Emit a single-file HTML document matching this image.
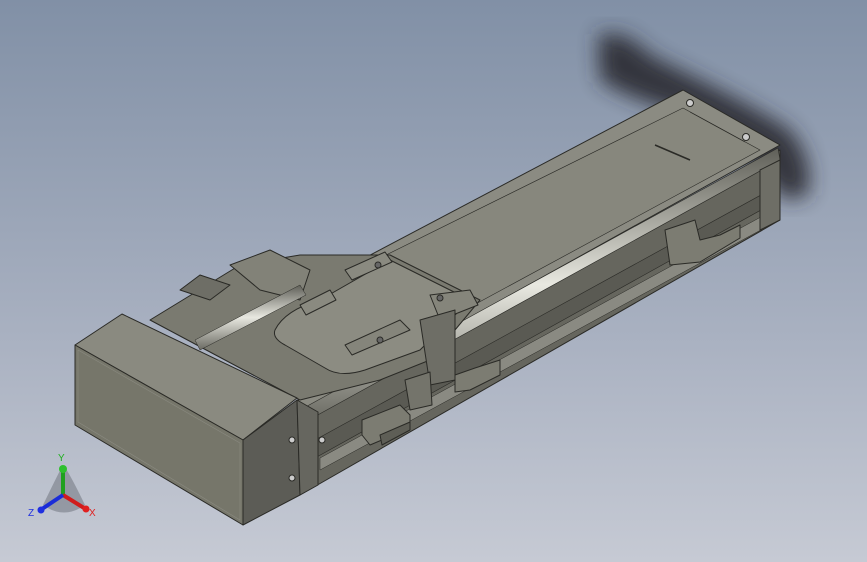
<!DOCTYPE html>
<html><head><style>
html,body{margin:0;padding:0;}
body{width:867px;height:562px;overflow:hidden;background:linear-gradient(#8190a6,#a9b1c1 60%,#c6cad4);}
svg{position:absolute;left:0;top:0}
</style></head><body>
<svg width="867" height="562" viewBox="0 0 867 562">
<defs>
<filter id="bl"><feGaussianBlur stdDeviation="10"/></filter>
<linearGradient id="rod" x1="0" y1="0" x2="0" y2="1"><stop offset="0" stop-color="#5f5f58"/><stop offset=".5" stop-color="#e8e8e0"/><stop offset="1" stop-color="#6a6a62"/></linearGradient>
</defs>
<!-- shadow -->
<path d="M598 35 Q625 28 650 55 L700 80 Q760 110 790 130 Q815 160 808 195 L785 200 L740 150 L690 115 Q630 100 600 80 Z" fill="#2a2c32" filter="url(#bl)" opacity=".9"/>
<g stroke="#2a2a26" stroke-width="1" stroke-linejoin="round">
<!-- rail side face -->
<polygon points="300,410 780,150 780,220 300,495" fill="#66665e"/>
<!-- rail top -->
<polygon points="285,300 683,90 780,145 300,412" fill="#8b8b82"/>
<polygon points="380,258 683,108 760,150 400,345" fill="#87877d" stroke-width=".6"/>
<line x1="655" y1="145" x2="690" y2="160" stroke-width="1.5"/>
<line x1="690" y1="112" x2="745" y2="142" stroke-width=".7"/>
<!-- top rounded edge rod -->
<polygon points="300,410 778,148 780,160 305,422" fill="url(#rod)" stroke-width=".6"/>
<!-- side slot -->
<polygon points="315,440 770,190 770,205 315,458" fill="#5a5a53" stroke-width=".6"/>
<polygon points="320,470 770,225 770,212 320,458" fill="#8a8a82" stroke-width=".5"/>
<!-- end cap right -->
<polygon points="760,170 780,160 780,220 760,230" fill="#6e6e66"/>
<!-- carriage & motor area -->
<polygon points="150,320 240,265 300,255 390,255 480,300 430,360 380,380 300,400" fill="#7a7a70"/>
<polygon points="230,265 270,250 310,270 300,300 260,290" fill="#828278"/>
<polygon points="180,290 200,275 230,285 210,300" fill="#6e6e66"/>
<polygon points="195,340 300,285 306,295 200,350" fill="url(#rod)" stroke-width=".5"/>
<!-- carriage plate -->
<path d="M275 330 Q285 310 320 300 L390 260 L440 285 L470 300 L420 350 L365 370 Q340 378 325 368 L285 345 Q272 338 275 330 Z" fill="#8c8c82"/>
<polygon points="345,270 385,252 392,262 352,280" fill="#8a8a80"/>
<polygon points="300,305 330,290 336,300 306,315" fill="#8a8a80"/>
<polygon points="345,345 400,320 410,330 352,355" fill="#85857b"/>
<polygon points="430,295 470,290 478,305 440,320" fill="#85857b"/>
<polygon points="420,320 455,310 455,380 430,385" fill="#6e6e66"/>
<!-- blocks on side -->
<polygon points="362,420 400,405 410,415 410,428 370,445 362,435" fill="#7c7c72"/>
<polygon points="380,435 410,422 410,430 382,445" fill="#5e5e56"/>
<polygon points="455,375 475,368 500,360 500,375 470,390 455,392" fill="#7c7c72"/>
<polygon points="665,230 695,220 700,240 720,235 740,225 740,238 700,262 670,265" fill="#7c7c72"/>
<polygon points="405,380 430,372 432,405 410,410" fill="#74746b"/>
<!-- motor box top -->
<polygon points="75,345 122,314 297,398 243,440" fill="#8a8a80"/>
<!-- motor box front face -->
<polygon points="75,345 243,440 243,525 75,425" fill="#76766a"/>
<polygon points="78,350 240,443 240,520 78,422" fill="none" stroke="#8a8a80" stroke-width=".6"/>
<!-- end plate -->
<polygon points="243,440 297,400 300,495 243,525" fill="#5c5c56"/>
<polygon points="297,400 318,412 318,485 300,495" fill="#66665f"/>
<circle cx="292" cy="440" r="3" fill="#ccc"/>
<circle cx="292" cy="478" r="3" fill="#ccc"/>
<circle cx="322" cy="440" r="3" fill="#ccc"/>
<circle cx="690" cy="103" r="3.5" fill="#ccc"/>
<circle cx="746" cy="137" r="3.5" fill="#ccc"/>
<circle cx="378" cy="265" r="3" fill="#666"/>
<circle cx="440" cy="298" r="3" fill="#666"/>
<circle cx="380" cy="340" r="3" fill="#666"/>
</g>
<!-- triad -->
<g>
<path d="M43 505 Q60 470 63 465 Q68 470 85 505 Q64 520 43 505 Z" fill="#6a6e78" opacity=".5"/>
<line x1="63" y1="495" x2="63" y2="470" stroke="#1fa01f" stroke-width="4"/>
<circle cx="63" cy="469" r="4" fill="#2ec02e"/>
<line x1="63" y1="495" x2="84" y2="508" stroke="#d01c1c" stroke-width="4"/>
<circle cx="86" cy="509" r="3.5" fill="#e02020"/>
<line x1="63" y1="495" x2="42" y2="509" stroke="#1a2cd8" stroke-width="4"/>
<circle cx="41" cy="510" r="3.5" fill="#2030e0"/>
<text x="58" y="461" font-family="Liberation Sans, sans-serif" font-size="10" fill="#1fb01f">Y</text>
<text x="89" y="516" font-family="Liberation Sans, sans-serif" font-size="10" fill="#e02020">X</text>
<text x="28" y="516" font-family="Liberation Sans, sans-serif" font-size="10" fill="#2030e0">Z</text>
</g>
</svg>
</body></html>
